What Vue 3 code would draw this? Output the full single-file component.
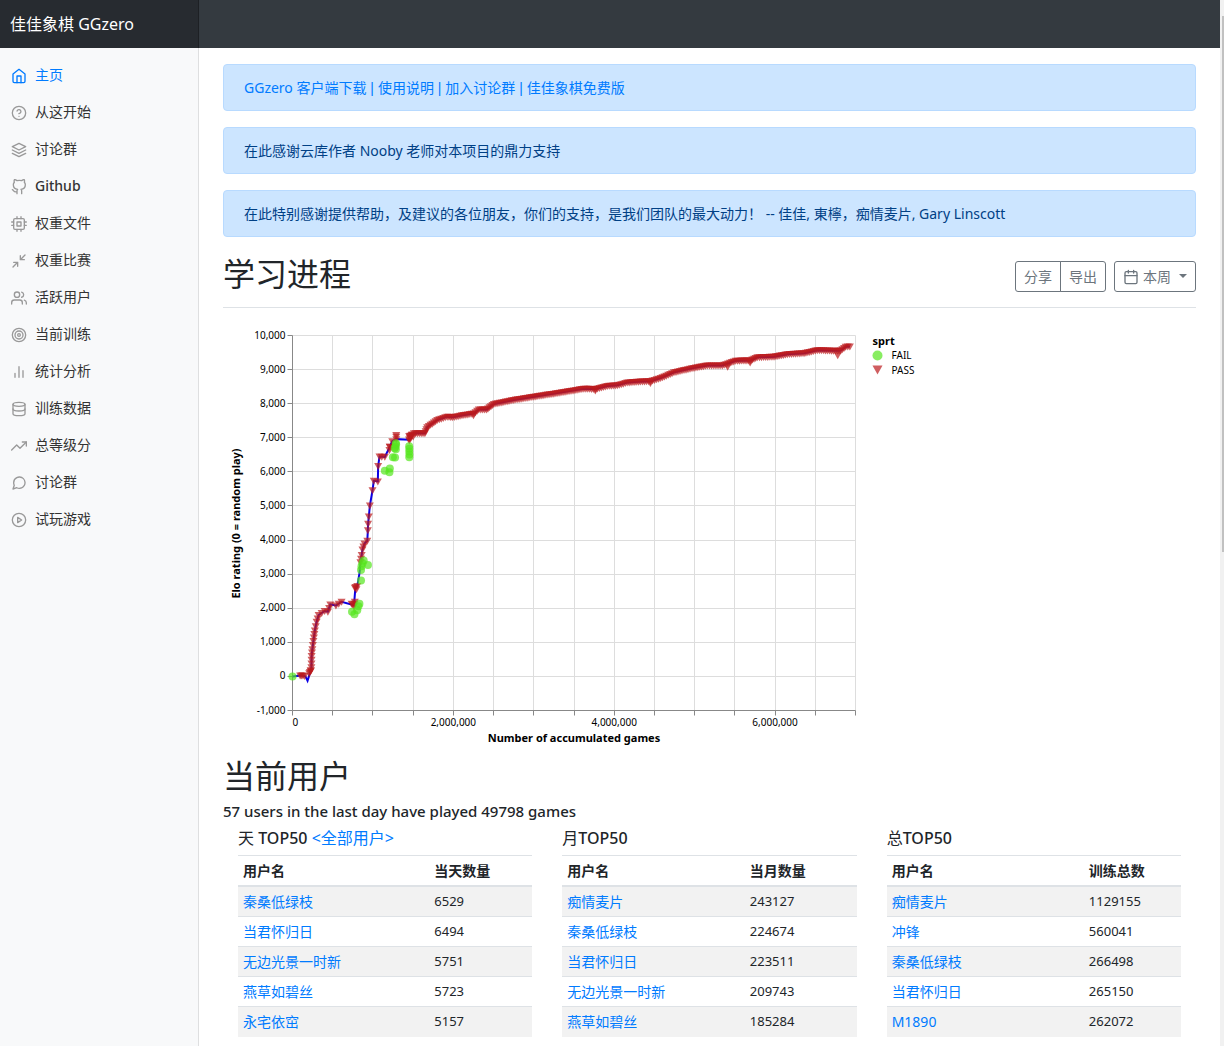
<script setup>
const navItems = [
  { label: '主页', active: true, icon: '<path d="M3 9l9-7 9 7v11a2 2 0 0 1-2 2H5a2 2 0 0 1-2-2z"/><path d="M9 22V12h6v10"/>' },
  { label: '从这开始', icon: '<circle cx="12" cy="12" r="10"/><path d="M9.09 9a3 3 0 0 1 5.83 1c0 2-3 3-3 3"/><path d="M12 17h.01"/>' },
  { label: '讨论群', icon: '<path d="M12 2L2 7l10 5 10-5-10-5z"/><path d="M2 17l10 5 10-5"/><path d="M2 12l10 5 10-5"/>' },
  { label: 'Github', latin: true, icon: '<path d="M9 19c-5 1.5-5-2.5-7-3m14 6v-3.87a3.37 3.37 0 0 0-.94-2.61c3.14-.35 6.44-1.54 6.44-7A5.44 5.44 0 0 0 20 4.77 5.07 5.07 0 0 0 19.91 1S18.73.65 16 2.48a13.38 13.38 0 0 0-7 0C6.27.65 5.09 1 5.09 1A5.07 5.07 0 0 0 5 4.77a5.44 5.44 0 0 0-1.5 3.78c0 5.42 3.3 6.61 6.44 7A3.37 3.37 0 0 0 9 18.13V22"/>' },
  { label: '权重文件', icon: '<rect x="4" y="4" width="16" height="16" rx="2"/><rect x="9" y="9" width="6" height="6"/><path d="M9 1v3M15 1v3M9 20v3M15 20v3M20 9h3M20 14h3M1 9h3M1 14h3"/>' },
  { label: '权重比赛', icon: '<path d="M4 14h6v6M20 10h-6V4M14 10l7-7M3 21l7-7"/>' },
  { label: '活跃用户', icon: '<path d="M17 21v-2a4 4 0 0 0-4-4H5a4 4 0 0 0-4 4v2"/><circle cx="9" cy="7" r="4"/><path d="M23 21v-2a4 4 0 0 0-3-3.87M16 3.13a4 4 0 0 1 0 7.75"/>' },
  { label: '当前训练', icon: '<circle cx="12" cy="12" r="10"/><circle cx="12" cy="12" r="6"/><circle cx="12" cy="12" r="2"/>' },
  { label: '统计分析', icon: '<path d="M18 20V10M12 20V4M6 20v-6"/>' },
  { label: '训练数据', icon: '<ellipse cx="12" cy="5" rx="9" ry="3"/><path d="M21 12c0 1.66-4 3-9 3s-9-1.34-9-3"/><path d="M3 5v14c0 1.66 4 3 9 3s9-1.34 9-3V5"/>' },
  { label: '总等级分', icon: '<path d="M23 6l-9.5 9.5-5-5L1 18"/><path d="M17 6h6v6"/>' },
  { label: '讨论群', icon: '<path d="M21 11.5a8.38 8.38 0 0 1-.9 3.8 8.5 8.5 0 0 1-7.6 4.7 8.38 8.38 0 0 1-3.8-.9L3 21l1.9-5.7a8.38 8.38 0 0 1-.9-3.8 8.5 8.5 0 0 1 4.7-7.6 8.38 8.38 0 0 1 3.8-.9h.5a8.48 8.48 0 0 1 8 8v.5z"/>' },
  { label: '试玩游戏', icon: '<circle cx="12" cy="12" r="10"/><path d="M10 8l6 4-6 4V8z"/>' },
]

const links = ['GGzero 客户端下载', '使用说明', '加入讨论群', '佳佳象棋免费版']

const boards = [
  {
    prefix: '天', gap: true, more: '<全部用户>', count: '当天数量', nameWidth: 65,
    rows: [['秦桑低绿枝', 6529], ['当君怀归日', 6494], ['无边光景一时新', 5751], ['燕草如碧丝', 5723], ['永宅依窋', 5157]],
  },
  {
    prefix: '月', count: '当月数量', nameWidth: 62,
    rows: [['痴情麦片', 243127], ['秦桑低绿枝', 224674], ['当君怀归日', 223511], ['无边光景一时新', 209743], ['燕草如碧丝', 185284]],
  },
  {
    prefix: '总', count: '训练总数', nameWidth: 67,
    rows: [['痴情麦片', 1129155], ['冲锋', 560041], ['秦桑低绿枝', 266498], ['当君怀归日', 265150], ['M1890', 262072]],
  },
]

// Chart: games are in thousands, ratings in Elo
const W = 563
const H = 375
const x = (games) => (games / 7000) * W
const y = (elo) => ((10000 - elo) / 11000) * H

const yTicks = Array.from({ length: 12 }, (_, i) => 10000 - i * 1000)
const xTicks = Array.from({ length: 15 }, (_, i) => i * 500)
const xLabels = [2000, 4000, 6000]

const early = [
  [0, 0], [112, 30], [160, 0], [187, -130], [215, 80], [230, 170], [235, 270], [238, 600], [247, 800],
  [260, 1040], [278, 1350], [300, 1600], [325, 1800], [400, 1920], [440, 1900], [470, 2110], [540, 2080],
  [610, 2190], [765, 2090], [780, 2550], [805, 2650], [833, 3030], [845, 3350], [860, 3560], [870, 3720],
  [895, 3900], [930, 3980], [937, 4290], [940, 4480], [949, 4690], [962, 5010], [995, 5460], [1011, 5740],
  [1061, 5720], [1065, 6170], [1082, 6450], [1148, 6440], [1210, 6740], [1240, 6900], [1290, 6960], [1451, 6940],
]
const late = [
  [1451, 6960], [1465, 7060], [1509, 7130], [1646, 7130], [1675, 7310], [1800, 7520], [1924, 7620], [1987, 7600],
  [2131, 7670], [2255, 7710], [2317, 7830], [2413, 7830], [2504, 7990], [2752, 8110], [3001, 8205], [3250, 8295],
  [3499, 8390], [3623, 8440], [3768, 8430], [3913, 8520], [4038, 8540], [4162, 8620], [4328, 8650], [4452, 8660],
  [4577, 8750], [4743, 8920], [4992, 9050], [5158, 9120], [5344, 9120], [5510, 9260], [5697, 9270], [5780, 9360],
  [5987, 9380], [6153, 9450], [6360, 9480], [6526, 9570], [6775, 9550], [6816, 9560], [6878, 9670], [6930, 9680],
]
const linePoints = [...early, ...late].map(([g, e]) => `${x(g)},${y(e)}`).join(' ')

function fill(points, step) {
  const out = []
  for (let i = 0; i < points.length - 1; i++) {
    const [g0, e0] = points[i]
    const [g1, e1] = points[i + 1]
    const n = Math.max(1, Math.round(Math.hypot(x(g1) - x(g0), y(e1) - y(e0)) / step))
    for (let k = 0; k < n; k++) {
      out.push([g0 + ((g1 - g0) * k) / n, e0 + ((e1 - e0) * k) / n])
    }
  }
  out.push(points[points.length - 1])
  return out
}
const between = (a, b) => early.filter(([g]) => g >= a && g <= b)
const passes = [
  [95, 30], [112, 30], [130, 30], [150, 10], [208, 90], [216, 130], [225, 170],
  ...fill(between(230, 610), 4),
  [735, 2130], [750, 2110], [765, 2060], [772, 2130], [775, 2190],
  [775, 2600], [785, 2620], [795, 2560], [805, 2650],
  ...fill(between(845, 930), 4),
  ...between(937, 1082), [1110, 6440], [1148, 6440], [1205, 6640], [1210, 6740],
  ...fill(between(1210, 1290), 4), [1290, 7080], [1290, 7030],
  [1451, 7050], [1453, 6920], [1470, 7010], [1480, 7080], [1500, 7040],
  ...fill(late, 2),
  [2250, 7660], [3765, 8390], [4450, 8610], [5410, 9080], [5690, 9210], [6779, 9420],
]
const fails = [
  [0, 0], [740, 1900], [770, 1820], [805, 1940], [820, 2060], [832, 2130],
  [852, 2810], [852, 3120], [858, 3230], [870, 3320], [885, 3400], [938, 3270],
  [1148, 6030], [1205, 5990], [1210, 6100], [1248, 6430], [1275, 6420],
  [1270, 6690], [1280, 6740], [1285, 6660], [1285, 6840], [1288, 6800],
  [1451, 6750], [1453, 6680], [1452, 6600], [1454, 6510], [1452, 6430],
]
</script>

<template>
  <div class="page">
    <header class="topbar">
      <a class="brand" href="#">佳佳象棋 GGzero</a>
    </header>

    <div class="body">
      <nav class="sidebar">
        <a
          v-for="(item, i) in navItems"
          :key="i"
          href="#"
          class="nav-link"
          :class="{ active: item.active, latin: item.latin }"
        >
          <svg class="icon" viewBox="0 0 24 24" aria-hidden="true" v-html="item.icon"></svg>
          <span>{{ item.label }}</span>
        </a>
      </nav>

      <main class="main">
        <div class="alert alert-links">
          <template v-for="(link, i) in links" :key="link"><span v-if="i" class="separator">{{ ' | ' }}</span><a href="#">{{ link }}</a></template>
        </div>
        <div class="alert">在此感谢云库作者 Nooby 老师对本项目的鼎力支持</div>
        <div class="alert">在此特别感谢提供帮助，及建议的各位朋友，你们的支持，是我们团队的最大动力！ -- 佳佳, 東檸，痴情麦片, Gary Linscott</div>

        <div class="heading">
          <h1 class="title">学习进程</h1>
          <div class="toolbar">
            <div class="group">
              <button type="button" class="btn">分享</button>
              <button type="button" class="btn">导出</button>
            </div>
            <button type="button" class="btn" aria-haspopup="true">
              <svg class="icon" viewBox="0 0 24 24" aria-hidden="true">
                <rect x="3" y="4" width="18" height="18" rx="2" />
                <path d="M16 2v4M8 2v4M3 10h18" />
              </svg>
              <span>本周</span>
              <span class="caret"></span>
            </button>
          </div>
        </div>

        <svg class="chart" width="710" height="425" role="img" aria-label="Elo rating">
          <g transform="translate(69.5 11.5)">
            <g class="grid">
              <line v-for="t in xTicks" :key="'gx' + t" :x1="Math.round(x(t))" :x2="Math.round(x(t))" y1="0" :y2="H" />
              <line v-for="t in yTicks" :key="'gy' + t" x1="0" :x2="W" :y1="Math.round(y(t))" :y2="Math.round(y(t))" />
            </g>
            <g class="axis">
              <line x1="0" x2="0" y1="0" :y2="H" />
              <line x1="0" :x2="W" :y1="H" :y2="H" />
              <line v-for="t in xTicks" :key="'tx' + t" :x1="Math.round(x(t))" :x2="Math.round(x(t))" :y1="H" :y2="H + 5" />
              <line v-for="t in yTicks" :key="'ty' + t" x1="-5" x2="0" :y1="Math.round(y(t))" :y2="Math.round(y(t))" />
            </g>
            <text v-for="t in yTicks" :key="'ly' + t" class="label" x="-7" :y="y(t) + 3" text-anchor="end">{{ t.toLocaleString('en-US') }}</text>
            <text class="label" x="0" :y="H + 15">0</text>
            <text v-for="t in xLabels" :key="'lx' + t" class="label" :x="x(t)" :y="H + 15" text-anchor="middle">{{ (t * 1000).toLocaleString('en-US') }}</text>
            <text class="axis-title" :x="W / 2" :y="H + 31" text-anchor="middle">Number of accumulated games</text>
            <text class="axis-title" transform="translate(-53 188) rotate(-90)" text-anchor="middle">Elo rating (0 = random play)</text>

            <polyline class="trend" :points="linePoints" />
            <path
              v-for="([g, e], i) in passes"
              :key="'p' + i"
              class="pass"
              d="M-4 -3H4L0 4Z"
              :transform="`translate(${x(g)} ${y(e)})`"
            />
            <circle v-for="([g, e], i) in fails" :key="'f' + i" class="fail" :cx="x(g)" :cy="y(e)" r="4" />

            <g transform="translate(580 -1)">
              <text class="axis-title" x="0" y="10">sprt</text>
              <circle class="fail" cx="5" cy="21" r="5" />
              <text class="label" x="19" y="24">FAIL</text>
              <path class="pass" d="M0 31H10L5 40Z" />
              <text class="label" x="19" y="39">PASS</text>
            </g>
          </g>
        </svg>

        <h2 class="title">当前用户</h2>
        <p class="summary">57 users in the last day have played 49798 games</p>

        <div class="boards">
          <section v-for="board in boards" :key="board.prefix" class="board">
            <h3 class="board-title">
              {{ board.prefix }}<template v-if="board.gap">&nbsp;</template><span class="latin">TOP50</span>
              <template v-if="board.more">{{ ' ' }}<a href="#">{{ board.more }}</a></template>
            </h3>
            <table>
              <colgroup>
                <col :style="{ width: board.nameWidth + '%' }" />
                <col />
              </colgroup>
              <thead>
                <tr>
                  <th scope="col">用户名</th>
                  <th scope="col">{{ board.count }}</th>
                </tr>
              </thead>
              <tbody>
                <tr v-for="row in board.rows" :key="row[0]">
                  <td><a href="#">{{ row[0] }}</a></td>
                  <td class="number">{{ row[1] }}</td>
                </tr>
              </tbody>
            </table>
          </section>
        </div>
      </main>
    </div>
    <div class="scroll-track" aria-hidden="true"><div class="scroll-thumb"></div></div>
  </div>
</template>

<style>
body {
  margin: 0;
  overflow: hidden;
}
</style>

<style scoped>
* {
  box-sizing: border-box;
}
.page {
  position: relative;
  height: 100vh;
  overflow: hidden;
  padding-right: 4px;
  background: #fff;
  color: #212529;
  font: 14px/21px "Noto Sans", "Noto Sans CJK SC", sans-serif;
}
a {
  color: #007bff;
  text-decoration: none;
}
.topbar {
  display: flex;
  height: 48px;
  background: #343a40;
}
.brand {
  width: 199px;
  padding: 12px 10px;
  background: rgba(0, 0, 0, 0.25);
  box-shadow: inset -1px 0 0 rgba(0, 0, 0, 0.25);
  color: #fff;
  font-size: 16px;
  line-height: 24px;
}
.body {
  display: flex;
}
.sidebar {
  flex: none;
  width: 199px;
  min-height: calc(100vh - 48px);
  padding-top: 8px;
  background: #f8f9fa;
  box-shadow: inset -1px 0 0 rgba(0, 0, 0, 0.1);
}
.nav-link {
  display: flex;
  align-items: center;
  gap: 8px;
  padding: 8px 11px;
  color: #333;
}
.icon {
  flex: none;
  width: 16px;
  height: 16px;
  margin-top: 2px;
  fill: none;
  stroke: currentColor;
  stroke-width: 2;
  stroke-linecap: round;
  stroke-linejoin: round;
}
.nav-link .icon {
  color: #999;
}
.nav-link.active,
.nav-link.active .icon {
  color: #007bff;
}
.latin {
  font-weight: 500;
}
.main {
  flex: 1;
  min-width: 0;
  padding: 16px 24px;
}
.alert {
  margin-bottom: 16px;
  padding: 12px 20px;
  border: 1px solid #b8daff;
  border-radius: 4px;
  background: #cce5ff;
  color: #004085;
}
.alert-links {
  color: #007bff;
}
.separator {
  font-family: "Liberation Sans", sans-serif;
  line-height: 1;
  white-space: pre;
}
.heading {
  display: flex;
  align-items: center;
  justify-content: space-between;
  height: 55px;
  margin-bottom: 16px;
  padding-bottom: 8px;
  border-bottom: 1px solid #dee2e6;
}
.title {
  margin: 0 0 7px;
  font-size: 32px;
  line-height: 38px;
  font-weight: 400;
}
.heading .title {
  margin-bottom: 4px;
}
.toolbar,
.group {
  display: flex;
}
.toolbar {
  gap: 8px;
}
.btn {
  display: flex;
  align-items: center;
  gap: 4px;
  height: 31px;
  padding: 4px 8px;
  border: 1px solid #6c757d;
  border-radius: 3px;
  background: transparent;
  color: #6c757d;
  font: inherit;
}
.group .btn:first-child {
  border-radius: 3px 0 0 3px;
}
.group .btn:last-child {
  margin-left: -1px;
  border-radius: 0 3px 3px 0;
}
.caret {
  margin-left: 4px;
  border: 4px solid transparent;
  border-top-color: currentColor;
  border-bottom: 0;
}
.chart {
  display: block;
  margin-bottom: 8px;
}
.grid line {
  stroke: #ddd;
}
.axis line {
  stroke: #888;
}
.label {
  font-size: 10px;
  fill: #000;
}
.axis-title {
  font-size: 11px;
  font-weight: 700;
  fill: #000;
}
.trend {
  fill: none;
  stroke: #0b00e6;
  stroke-width: 2;
}
.pass {
  fill: #bb1a1c;
  opacity: 0.7;
}
.fail {
  fill: #55e61e;
  opacity: 0.7;
}
.summary {
  margin: 0 0 8px;
  font-size: 15px;
  line-height: 19px;
  font-weight: 500;
}
.boards {
  display: flex;
}
.board {
  flex: 1;
  padding: 0 15px;
}
.board-title {
  margin: 0 0 7px;
  font-size: 16px;
  line-height: 19px;
  font-weight: 400;
}
table {
  width: 100%;
  table-layout: fixed;
  border-collapse: collapse;
}
th,
td {
  height: 30px;
  padding: 4px 5px;
  border-top: 1px solid #dee2e6;
  text-align: left;
}
th {
  border-bottom: 2px solid #dee2e6;
}
tbody tr:nth-child(odd) {
  background: #f2f2f2;
}
.number {
  font-size: 13px;
}
.scroll-track {
  position: absolute;
  top: 0;
  right: 0;
  width: 4px;
  height: 100%;
  padding: 16px 0 0 2px;
  background: #f1f1f1;
}
.scroll-thumb {
  height: 52%;
  background: #c1c1c1;
}
</style>
